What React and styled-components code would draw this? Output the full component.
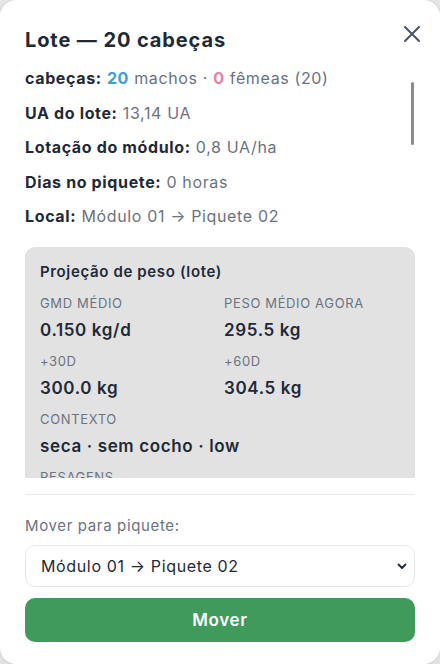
import React, { useState } from "react";
import styled, { createGlobalStyle } from "styled-components";

const GlobalStyle = createGlobalStyle`
  html, body {
    margin: 0;
    padding: 0;
    background: #e9e9ea;
    font-family: "Inter", "Noto Sans", sans-serif;
  }
  * { box-sizing: border-box; }
`;

const options = ["Módulo 01 → Piquete 01", "Módulo 01 → Piquete 02", "Módulo 01 → Piquete 03"];

const App = () => {
  const [target, setTarget] = useState(options[1]);

  return (
    <>
      <GlobalStyle />
      <Modal>
        <Header>
          <Title>Lote — 20 cabeças</Title>
          <CloseButton aria-label="Fechar">
            <svg width="20" height="20" viewBox="0 0 20 20" fill="none">
              <path d="M3 3L17 17M17 3L3 17" stroke="#4b5563" strokeWidth="2" strokeLinecap="round" />
            </svg>
          </CloseButton>
        </Header>

        <ScrollWrap>
          <Body>
            <InfoRow>
              <Label>cabeças:</Label> <Count $color="#3a9fd6">20</Count> machos ·{" "}
              <Count $color="#ea7fa6">0</Count> fêmeas (20)
            </InfoRow>
            <InfoRow>
              <Label>UA do lote:</Label> 13,14 UA
            </InfoRow>
            <InfoRow>
              <Label>Lotação do módulo:</Label> 0,8 UA/ha
            </InfoRow>
            <InfoRow>
              <Label>Dias no piquete:</Label> 0 horas
            </InfoRow>
            <InfoRow>
              <Label>Local:</Label> Módulo 01 → Piquete 02
            </InfoRow>

            <ProjectionBox>
              <BoxTitle>Projeção de peso (lote)</BoxTitle>
              <StatsGrid>
                <Stat>
                  <StatLabel>GMD médio</StatLabel>
                  <StatValue>0.150 kg/d</StatValue>
                </Stat>
                <Stat>
                  <StatLabel>Peso médio agora</StatLabel>
                  <StatValue>295.5 kg</StatValue>
                </Stat>
                <Stat>
                  <StatLabel>+30d</StatLabel>
                  <StatValue>300.0 kg</StatValue>
                </Stat>
                <Stat>
                  <StatLabel>+60d</StatLabel>
                  <StatValue>304.5 kg</StatValue>
                </Stat>
                <Stat $wide>
                  <StatLabel>Contexto</StatLabel>
                  <StatValue>seca · sem cocho · low</StatValue>
                </Stat>
                <Stat $wide>
                  <StatLabel>Pesagens</StatLabel>
                  <StatValue>3 registros</StatValue>
                </Stat>
              </StatsGrid>
            </ProjectionBox>
          </Body>
          <ScrollThumb />
        </ScrollWrap>

        <Footer>
          <FieldLabel htmlFor="piquete">Mover para piquete:</FieldLabel>
          <SelectWrap>
            <Select id="piquete" value={target} onChange={(e) => setTarget(e.target.value)}>
              {options.map((o) => (
                <option key={o} value={o}>
                  {o}
                </option>
              ))}
            </Select>
            <Chevron width="14" height="14" viewBox="0 0 14 14" fill="none">
              <path d="M3.5 5.5L7 9L10.5 5.5" stroke="#1f2937" strokeWidth="1.8" strokeLinecap="round" strokeLinejoin="round" />
            </Chevron>
          </SelectWrap>
          <MoveButton>Mover</MoveButton>
        </Footer>
      </Modal>
    </>
  );
};

// Styled Components
const Modal = styled.div`
  width: 440px;
  height: 664px;
  background: #ffffff;
  border-radius: 16px;
  box-shadow: 0 0 0 1px rgba(0, 0, 0, 0.06), 0 4px 16px rgba(0, 0, 0, 0.08);
  display: flex;
  flex-direction: column;
  overflow: hidden;
  letter-spacing: 0.04em;
`;

const Header = styled.div`
  display: flex;
  align-items: center;
  justify-content: space-between;
  padding: 26px 16px 0 25px;
  height: 62px;
`;

const Title = styled.h1`
  margin: 0;
  font-size: 20px;
  line-height: 28px;
  font-weight: 700;
  color: #1f2937;
  margin-top: -8px;
  letter-spacing: 0.045em;
`;

const CloseButton = styled.button`
  border: none;
  background: transparent;
  padding: 0;
  width: 24px;
  height: 24px;
  display: flex;
  align-items: center;
  justify-content: center;
  cursor: pointer;
  margin-top: -20px;
`;

const ScrollWrap = styled.div`
  position: relative;
  flex: 1;
  min-height: 0;
  margin: 0 25px;
  overflow: hidden;
`;

const Body = styled.div`
  height: 100%;
  overflow-y: auto;
  scrollbar-width: none;
  display: flex;
  flex-direction: column;
  gap: 10.5px;
  padding-top: 4px;
`;

const ScrollThumb = styled.div`
  position: absolute;
  right: 1px;
  top: 20px;
  width: 3px;
  height: 63px;
  border-radius: 2px;
  background: #8c8c8c;
`;

const InfoRow = styled.div`
  font-size: 16px;
  line-height: 24px;
  color: #6b7280;
  white-space: nowrap;
`;

const Label = styled.span`
  font-weight: 700;
  color: #1f2937;
`;

const Count = styled.span`
  font-weight: 700;
  color: ${(p) => p.$color};
`;

const ProjectionBox = styled.div`
  flex-shrink: 0;
  margin-top: 8px;
  background: #e2e2e3;
  border-radius: 10px;
  padding: 14px 15px 16px;
`;

const BoxTitle = styled.h2`
  margin: 0 0 10px;
  font-size: 15px;
  line-height: 22px;
  font-weight: 600;
  color: #1f2937;
`;

const StatsGrid = styled.div`
  display: grid;
  grid-template-columns: 184px 1fr;
  row-gap: 9px;
`;

const Stat = styled.div`
  display: flex;
  flex-direction: column;
  gap: 5px;
  grid-column: ${(p) => (p.$wide ? "1 / -1" : "auto")};
`;

const StatLabel = styled.div`
  font-size: 13px;
  line-height: 20px;
  color: #6b7280;
  text-transform: uppercase;
`;

const StatValue = styled.div`
  font-size: 17px;
  line-height: 24px;
  font-weight: 600;
  color: #1f2937;
`;

const Footer = styled.div`
  margin: 16px 25px 0;
  border-top: 1px solid #e3e8ee;
  padding: 20px 0 22px;
  display: flex;
  flex-direction: column;
`;

const FieldLabel = styled.label`
  font-size: 15px;
  line-height: 22px;
  color: #6b7280;
  margin-bottom: 8px;
`;

const SelectWrap = styled.div`
  position: relative;
  margin-bottom: 11px;
`;

const Select = styled.select`
  appearance: none;
  width: 100%;
  height: 42px;
  border: 1px solid #e5e7eb;
  border-radius: 10px;
  background: #ffffff;
  padding: 0 36px 0 15px;
  font-family: inherit;
  font-size: 16px;
  letter-spacing: inherit;
  color: #1f2937;
`;

const Chevron = styled.svg`
  position: absolute;
  right: 6px;
  top: 14px;
  pointer-events: none;
`;

const MoveButton = styled.button`
  height: 44px;
  border: none;
  border-radius: 10px;
  background: #3f9a5c;
  color: #ffffff;
  font-family: inherit;
  font-size: 17px;
  font-weight: 600;
  letter-spacing: inherit;
  cursor: pointer;
`;

export default App;
